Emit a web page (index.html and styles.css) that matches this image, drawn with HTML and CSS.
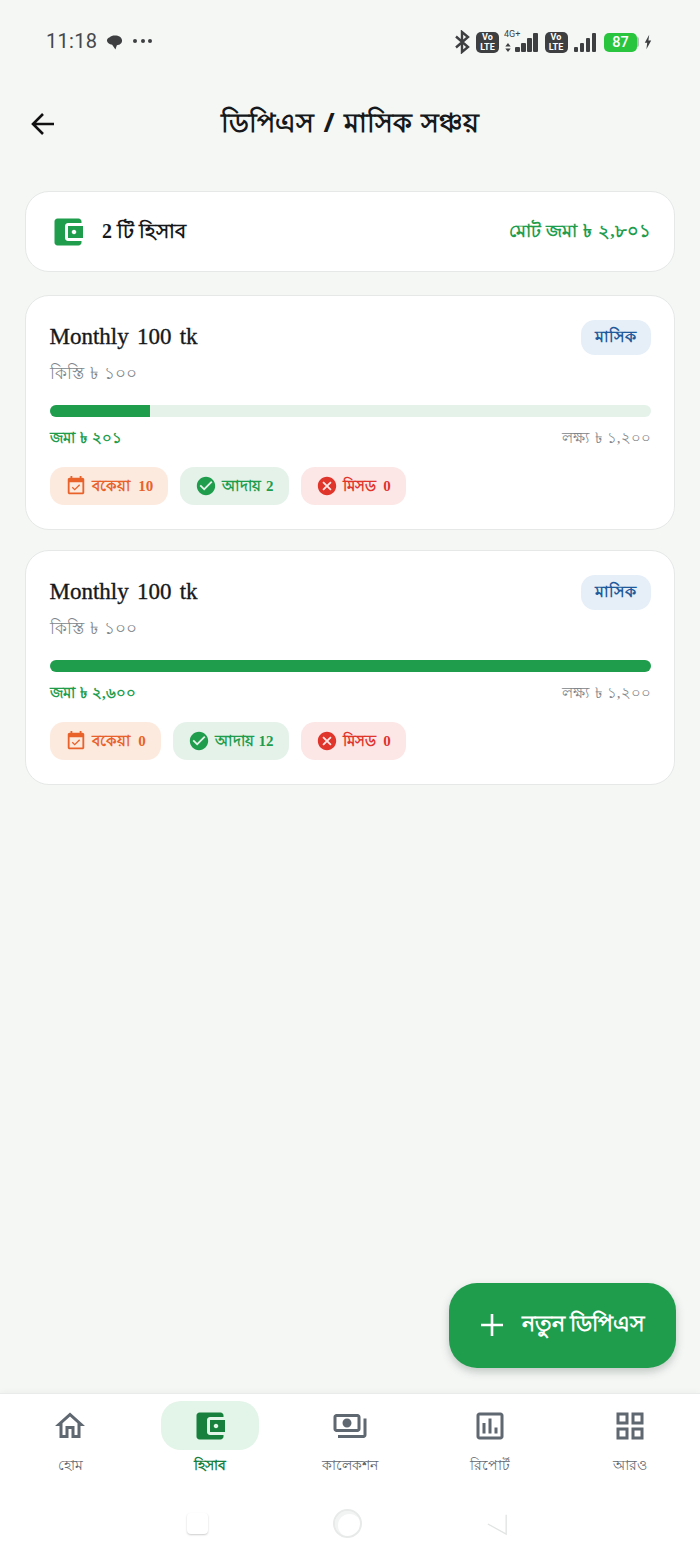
FILE: index.html
```html
<!DOCTYPE html>
<html lang="bn">
<head>
    <meta charset="UTF-8">
    <meta name="viewport" content="width=device-width, initial-scale=1.0">
    <title>ডিপিএস / মাসিক সঞ্চয়</title>
    <link rel="stylesheet" href="styles.css">
</head>
<body>
    <div class="screen">
        <div class="status-bar">
            <div class="status-left">
                <span class="clock">11:18</span>
                <svg class="chat-icon" viewBox="0 0 18 18"><path d="M4 3.500C5 2 7 1.500 9.500 1.500c4 0 7.500 2 7.500 5.500 0 3-2.500 4.800-5.500 5L10 16.500 6.500 11.500C3.500 11 1 9.500 1 7c0-1.500 1.300-3 3-3.500z"/></svg>
                <span class="dots"><i></i><i></i><i></i></span>
            </div>
            <div class="status-right">
                <svg class="bt-icon" viewBox="0 0 15 24"><path d="M1.500 6.500l12 10.500-6 5V2l6 5-12 10.500" fill="none" stroke="#3d3f41" stroke-width="2.400"/></svg>
                <span class="volte">Vo<br>LTE</span>
                <span class="net">
                    <span class="net-label">4G+</span>
                    <svg class="arrows" viewBox="0 0 6 10"><path d="M3 0l3 4H0zM3 10L0 6h6z"/></svg>
                </span>
                <span class="signal"><i class="s1"></i><i class="s2"></i><i class="s3"></i><i class="s4"></i></span>
                <span class="volte">Vo<br>LTE</span>
                <span class="signal"><i class="s1"></i><i class="s2"></i><i class="s3"></i><i class="s4"></i></span>
                <span class="battery">87</span>
                <span class="battery-tip"></span>
                <svg class="bolt" viewBox="0 0 10 18"><path d="M6.500 0L1 10h3l-1 8 6-11H5.500z"/></svg>
            </div>
        </div>

        <header class="app-header">
            <svg class="back-icon" viewBox="0 0 26 26"><path d="M24 13H3M13 3L3 13l10 10" fill="none" stroke="#111" stroke-width="2.600"/></svg>
            <h1 class="page-title">ডিপিএস / মাসিক সঞ্চয়</h1>
        </header>

        <main class="content">
            <section class="summary-card">
                <div class="summary-left">
                    <svg class="wallet-icon" viewBox="0 0 24 24"><path d="M21 18v1c0 1.100-.9 2-2 2H5c-1.110 0-2-.9-2-2V5c0-1.100.89-2 2-2h14c1.100 0 2 .9 2 2v1h-9c-1.110 0-2 .9-2 2v8c0 1.100.89 2 2 2h9zm-9-2h10V8H12v8zm4-2.500c-.83 0-1.500-.67-1.500-1.500s.67-1.500 1.500-1.500 1.500.67 1.500 1.500-.67 1.500-1.500 1.500z"/></svg>
                    <span class="summary-count">2 টি হিসাব</span>
                </div>
                <span class="summary-total">মোট জমা ৳ ২,৮০১</span>
            </section>

            <section class="plan-card">
                <div class="plan-top">
                    <div>
                        <div class="plan-name">Monthly 100 tk</div>
                        <div class="plan-sub">কিস্তি ৳ ১০০</div>
                    </div>
                    <span class="plan-badge">মাসিক</span>
                </div>
                <div class="progress"><div class="progress-fill" style="width: 16.750%"></div></div>
                <div class="progress-labels">
                    <span class="saved">জমা ৳ ২০১</span>
                    <span class="goal">লক্ষ্য ৳ ১,২০০</span>
                </div>
                <div class="chips">
                    <span class="chip chip-due">
                        <svg viewBox="0 0 24 24"><path d="M16.530 11.060L15.470 10l-4.880 4.880-2.120-2.120-1.060 1.060L10.590 17l5.940-5.940zM19 3h-1V1h-2v2H8V1H6v2H5c-1.110 0-1.990.9-1.990 2L3 19c0 1.100.89 2 2 2h14c1.100 0 2-.9 2-2V5c0-1.100-.9-2-2-2zm0 16H5V8h14v11z"/></svg>
                        বকেয়া 10
                    </span>
                    <span class="chip chip-paid">
                        <svg viewBox="0 0 24 24"><path d="M12 2C6.480 2 2 6.480 2 12s4.480 10 10 10 10-4.480 10-10S17.520 2 12 2zm-2 15l-5-5 1.410-1.410L10 14.170l7.590-7.590L19 8l-9 9z"/></svg>
                        আদায় 2
                    </span>
                    <span class="chip chip-missed">
                        <svg viewBox="0 0 24 24"><path d="M12 2C6.470 2 2 6.470 2 12s4.470 10 10 10 10-4.470 10-10S17.530 2 12 2zm5 13.590L15.590 17 12 13.410 8.410 17 7 15.590 10.590 12 7 8.410 8.410 7 12 10.590 15.590 7 17 8.410 13.410 12 17 15.590z"/></svg>
                        মিসড 0
                    </span>
                </div>
            </section>

            <section class="plan-card">
                <div class="plan-top">
                    <div>
                        <div class="plan-name">Monthly 100 tk</div>
                        <div class="plan-sub">কিস্তি ৳ ১০০</div>
                    </div>
                    <span class="plan-badge">মাসিক</span>
                </div>
                <div class="progress"><div class="progress-fill" style="width: 100%"></div></div>
                <div class="progress-labels">
                    <span class="saved">জমা ৳ ২,৬০০</span>
                    <span class="goal">লক্ষ্য ৳ ১,২০০</span>
                </div>
                <div class="chips">
                    <span class="chip chip-due">
                        <svg viewBox="0 0 24 24"><path d="M16.530 11.060L15.470 10l-4.880 4.880-2.120-2.120-1.060 1.060L10.590 17l5.940-5.940zM19 3h-1V1h-2v2H8V1H6v2H5c-1.110 0-1.990.9-1.990 2L3 19c0 1.100.89 2 2 2h14c1.100 0 2-.9 2-2V5c0-1.100-.9-2-2-2zm0 16H5V8h14v11z"/></svg>
                        বকেয়া 0
                    </span>
                    <span class="chip chip-paid">
                        <svg viewBox="0 0 24 24"><path d="M12 2C6.480 2 2 6.480 2 12s4.480 10 10 10 10-4.480 10-10S17.520 2 12 2zm-2 15l-5-5 1.410-1.410L10 14.170l7.590-7.590L19 8l-9 9z"/></svg>
                        আদায় 12
                    </span>
                    <span class="chip chip-missed">
                        <svg viewBox="0 0 24 24"><path d="M12 2C6.470 2 2 6.470 2 12s4.470 10 10 10 10-4.470 10-10S17.530 2 12 2zm5 13.590L15.590 17 12 13.410 8.410 17 7 15.590 10.590 12 7 8.410 8.410 7 12 10.590 15.590 7 17 8.410 13.410 12 17 15.590z"/></svg>
                        মিসড 0
                    </span>
                </div>
            </section>
        </main>

        <button class="fab">
            <svg viewBox="0 0 24 24"><path d="M12 1v22M1 12h22" fill="none" stroke="#fff" stroke-width="2.600"/></svg>
            নতুন ডিপিএস
        </button>

        <nav class="bottom-nav">
            <a class="nav-item">
                <span class="nav-icon"><svg viewBox="0 0 24 24"><path d="M12 5.690l5 4.500V18h-2v-6H9v6H7v-7.810l5-4.500M12 3L2 12h3v8h6v-6h2v6h6v-8h3L12 3z"/></svg></span>
                <span class="nav-label">হোম</span>
            </a>
            <a class="nav-item active">
                <span class="nav-icon"><svg viewBox="0 0 24 24"><path d="M21 18v1c0 1.100-.9 2-2 2H5c-1.110 0-2-.9-2-2V5c0-1.100.89-2 2-2h14c1.100 0 2 .9 2 2v1h-9c-1.110 0-2 .9-2 2v8c0 1.100.89 2 2 2h9zm-9-2h10V8H12v8zm4-2.500c-.83 0-1.500-.67-1.500-1.500s.67-1.500 1.500-1.500 1.500.67 1.500 1.500-.67 1.500-1.500 1.500z"/></svg></span>
                <span class="nav-label">হিসাব</span>
            </a>
            <a class="nav-item">
                <span class="nav-icon"><svg viewBox="0 0 24 24"><path d="M19 14V6c0-1.100-.9-2-2-2H3c-1.100 0-2 .9-2 2v8c0 1.100.9 2 2 2h14c1.100 0 2-.9 2-2zm-2 0H3V6h14v8zm-7-7c-1.660 0-3 1.340-3 3s1.340 3 3 3 3-1.340 3-3-1.340-3-3-3zm13 0v11c0 1.100-.9 2-2 2H4v-2h17V7h2z"/></svg></span>
                <span class="nav-label">কালেকশন</span>
            </a>
            <a class="nav-item">
                <span class="nav-icon"><svg viewBox="0 0 24 24"><path d="M19 3H5c-1.100 0-2 .9-2 2v14c0 1.100.9 2 2 2h14c1.100 0 2-.9 2-2V5c0-1.100-.9-2-2-2zm0 16H5V5h14v14zM7 10h2v7H7zm4-3h2v10h-2zm4 6h2v4h-2z"/></svg></span>
                <span class="nav-label">রিপোর্ট</span>
            </a>
            <a class="nav-item">
                <span class="nav-icon"><svg viewBox="0 0 24 24"><path d="M3 3v8h8V3H3zm6 6H5V5h4v4zm-6 4v8h8v-8H3zm6 6H5v-4h4v4zm4-16v8h8V3h-8zm6 6h-4V5h4v4zm-6 4v8h8v-8h-8zm6 6h-4v-4h4v4z"/></svg></span>
                <span class="nav-label">আরও</span>
            </a>
        </nav>

        <div class="system-nav">
            <span class="sys-square"></span>
            <span class="sys-circle"></span>
            <svg class="sys-back" viewBox="0 0 24 24"><path d="M22 2v21L2 12" fill="none" stroke="#e2e4e4" stroke-width="1.500"/></svg>
        </div>
    </div>
</body>
</html>
```

FILE: styles.css
```css
:root {
    --green: #1f9d4d;
    --green-dark: #17803c;
    --bg: #f5f7f5;
    --line: #e6e8e7;
    --text: #16191b;
    --muted: #80868b;
    --nav-grey: #5f6770;
}

* {
    margin: 0;
    padding: 0;
    box-sizing: border-box;
}

body {
    font-family: "Liberation Serif", "Noto Sans", serif;
    background-color: var(--bg);
    color: var(--text);
}

.screen {
    position: relative;
    width: 700px;
    height: 1558px;
    display: flex;
    flex-direction: column;
    overflow: hidden;
}

/* status bar */
.status-bar {
    height: 82px;
    padding: 0 48px 0 46px;
    display: flex;
    justify-content: space-between;
    align-items: center;
}

.status-left,
.status-right {
    display: flex;
    align-items: center;
}

.status-right {
    margin-top: 2px;
}

.clock {
    font-family: Roboto, sans-serif;
    font-size: 20px;
    letter-spacing: 0.3px;
    color: #45484a;
}

.chat-icon {
    width: 17px;
    height: 17px;
    margin-left: 9px;
    margin-top: 3px;
    fill: #3d3f41;
}

.dots {
    display: flex;
    gap: 3.500px;
    margin-left: 10px;
}

.dots i {
    width: 4px;
    height: 4px;
    border-radius: 50%;
    background-color: #3d3f41;
}

.bt-icon {
    width: 16px;
    height: 24px;
    margin-right: 6px;
}

.volte {
    width: 23px;
    height: 21px;
    border-radius: 5px;
    background-color: #3d3f41;
    color: #fff;
    font-family: Roboto, sans-serif;
    font-size: 9px;
    font-weight: 700;
    line-height: 10.500px;
    text-align: center;
}

.net {
    width: 12px;
    height: 20px;
    margin-left: 4px;
    position: relative;
}

.net-label {
    position: absolute;
    left: 1px;
    top: -3px;
    font-family: Roboto, sans-serif;
    font-size: 9px;
    line-height: 10px;
    color: #3d3f41;
}

.arrows {
    position: absolute;
    left: 2px;
    bottom: 0;
    width: 6px;
    height: 9px;
    fill: #3d3f41;
}

.signal {
    display: flex;
    align-items: flex-end;
    gap: 1.500px;
    height: 19px;
    margin-right: 7px;
}

.signal + .volte + .signal {
    margin-right: 8px;
}

.volte + .signal {
    margin-left: 6px;
}

.signal i {
    width: 4.500px;
    background-color: #3d3f41;
    border-radius: 1px;
}

.s1 { height: 5px; }
.s2 { height: 9px; }
.s3 { height: 14px; }
.s4 { height: 19px; }

.battery {
    width: 33px;
    height: 19px;
    border-radius: 5px;
    background-color: #2ac53f;
    color: #fff;
    font-family: Roboto, sans-serif;
    font-size: 14.500px;
    font-weight: 500;
    line-height: 19px;
    text-align: center;
}

.battery-tip {
    width: 2px;
    height: 10px;
    border-radius: 0 2px 2px 0;
    background-color: #b9bdbb;
    margin-right: 5px;
}

.bolt {
    width: 8px;
    height: 18px;
    fill: #3d3f41;
}

/* header */
.app-header {
    height: 84px;
    position: relative;
    display: flex;
    justify-content: center;
    align-items: center;
}

.back-icon {
    position: absolute;
    left: 30px;
    top: 29px;
    width: 26px;
    height: 26px;
}

.page-title {
    font-family: "Noto Sans", sans-serif;
    font-size: 27px;
    font-weight: 700;
    word-spacing: 2px;
    color: var(--text);
}

/* content */
.content {
    flex: 1;
    padding: 25px 25px 0;
    display: flex;
    flex-direction: column;
    gap: 23px;
}

.summary-card,
.plan-card {
    background-color: #fff;
    border: 1.500px solid var(--line);
    border-radius: 24px;
}

.summary-card {
    height: 81px;
    padding: 1px 23.500px 0 24px;
    display: flex;
    justify-content: space-between;
    align-items: center;
}

.summary-left {
    display: flex;
    align-items: center;
    gap: 16px;
}

.wallet-icon {
    width: 36px;
    height: 36px;
    fill: var(--green);
}

.summary-count {
    font-size: 20px;
    font-weight: 600;
}

.summary-total {
    font-size: 17.500px;
    font-weight: 600;
    word-spacing: 1.500px;
    color: var(--green);
}

.plan-card {
    height: 235px;
    padding: 23px 23.500px 0;
}

.plan-card + .plan-card {
    margin-top: -3px;
}

.plan-top {
    display: flex;
    justify-content: space-between;
    align-items: flex-start;
}

.plan-name {
    font-size: 23px;
    word-spacing: 2.500px;
    -webkit-text-stroke: 0.35px var(--text);
    line-height: 36px;
}

.plan-sub {
    padding-top: 1px;
    font-size: 17px;
    word-spacing: 2px;
    color: var(--muted);
    line-height: 36px;
}

.plan-badge {
    margin-top: 1px;
    padding: 0 14.500px;
    height: 35px;
    line-height: 33px;
    border-radius: 14px;
    background-color: #e6eef8;
    color: #1f5b9c;
    font-size: 16px;
    font-weight: 600;
}

.progress {
    height: 12px;
    margin-top: 13px;
    border-radius: 6px;
    background-color: #e5f2ea;
    overflow: hidden;
}

.progress-fill {
    height: 100%;
    background-color: var(--green);
}

.progress-labels {
    display: flex;
    justify-content: space-between;
    align-items: center;
    height: 32px;
    margin-top: 5px;
}

.saved {
    font-size: 15px;
    font-weight: 700;
    word-spacing: 1.500px;
    color: var(--green);
}

.goal {
    font-size: 15px;
    word-spacing: 1.500px;
    color: var(--muted);
}

.chips {
    display: flex;
    gap: 12px;
    margin-top: 13px;
}

.chip {
    height: 38px;
    padding: 0 15px;
    display: flex;
    align-items: center;
    gap: 5px;
    border-radius: 14px;
    font-size: 15px;
    font-weight: 600;
}

.chip svg {
    width: 22px;
    height: 22px;
}

.chip-due {
    word-spacing: 5px;
    background-color: #fdeadf;
    color: #e8622a;
    fill: #e8622a;
}

.chip-paid {
    word-spacing: 1px;
    background-color: #e5f2ea;
    color: var(--green);
    fill: var(--green);
}

.chip-missed {
    word-spacing: 4px;
    background-color: #fce6e6;
    color: #e0352b;
    fill: #e0352b;
}

/* floating button */
.fab {
    position: absolute;
    left: 449px;
    top: 1283px;
    width: 227px;
    height: 85px;
    padding-bottom: 2px;
    border: none;
    border-radius: 28px;
    background-color: var(--green);
    color: #fff;
    font-family: inherit;
    font-size: 22px;
    font-weight: 600;
    display: flex;
    justify-content: center;
    align-items: center;
    gap: 18px;
    box-shadow: 0 4px 8px rgba(40, 60, 50, 0.25);
}

.fab svg {
    width: 24px;
    height: 24px;
}

/* bottom nav */
.bottom-nav {
    height: 108px;
    padding-top: 7px;
    background-color: #fff;
    border-top: 1px solid #e9ebea;
    box-shadow: 0 -1px 6px rgba(0, 0, 0, 0.04);
    display: grid;
    grid-template-columns: repeat(5, 1fr);
}

.nav-item {
    display: flex;
    flex-direction: column;
    align-items: center;
    color: var(--nav-grey);
}

.nav-icon {
    width: 98px;
    height: 49px;
    display: flex;
    justify-content: center;
    align-items: center;
    border-radius: 20px;
}

.nav-icon svg {
    width: 36px;
    height: 36px;
    fill: var(--nav-grey);
}

.nav-label {
    font-size: 14px;
    line-height: 31px;
}

.nav-item.active {
    color: var(--green-dark);
}

.nav-item.active .nav-icon {
    background-color: #e3f4e8;
}

.nav-item.active .nav-icon svg {
    fill: var(--green-dark);
}

.nav-item.active .nav-label {
    font-weight: 700;
}

/* android nav */
.system-nav {
    height: 57px;
    padding: 0 192px 12px 187px;
    background-color: #fff;
    display: flex;
    justify-content: space-between;
    align-items: center;
}

.sys-square {
    width: 21px;
    height: 21px;
    border-radius: 4px;
    background-color: #fff;
    box-shadow: 0 1px 2px rgba(0, 0, 0, 0.2);
}

.sys-circle {
    width: 29px;
    height: 29px;
    border-radius: 50%;
    border: 2px solid #e8eaea;
    box-shadow: inset 2px 2px 0 1px #f2f3f3;
}

.sys-back {
    width: 22px;
    height: 24px;
}
```
